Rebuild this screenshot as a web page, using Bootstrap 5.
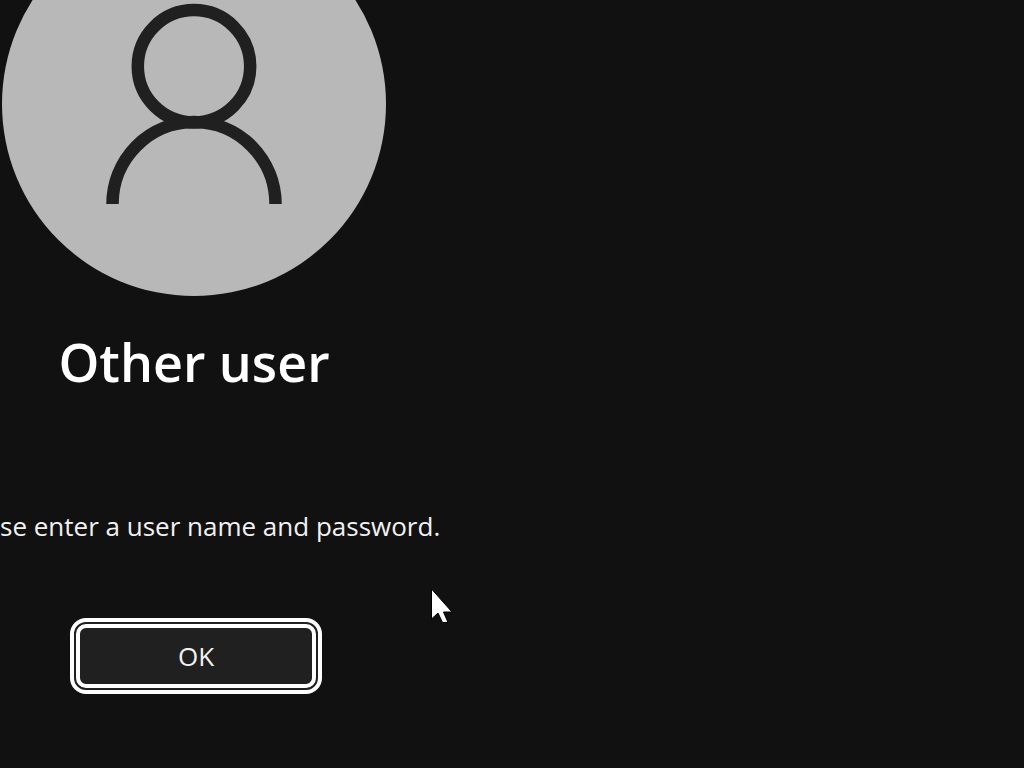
<!DOCTYPE html>
<html lang="en">
<head>
<meta charset="utf-8">
<meta name="viewport" content="width=device-width, initial-scale=1">
<title>Other user</title>
<link href="https://cdn.jsdelivr.net/npm/bootstrap@5.3.0/dist/css/bootstrap.min.css" rel="stylesheet">
<style>
  body { background: #111; color: #fff; font-family: "Open Sans", "Noto Sans", sans-serif; }
  .sign-in { width: 388px; }
  .avatar { width: 384px; height: 296px; }
  .user-name { font-size: 52px; font-weight: 600; line-height: 64px; margin-top: 34px; }
  .message { color: #f2f2f2; font-size: 26px; line-height: 36px; margin-top: 114px; }
  .btn-ok {
    --bs-btn-color: #f2f2f2; --bs-btn-bg: #202020; --bs-btn-border-color: #fff;
    --bs-btn-hover-color: #fff; --bs-btn-hover-bg: #2b2b2b; --bs-btn-hover-border-color: #fff;
    --bs-btn-border-width: 4px; --bs-btn-border-radius: 10px; --bs-btn-font-size: 26px;
    width: 240px; height: 64px; margin: 80px 0 0 4px; line-height: 36px;
    outline: 4px solid #fff; outline-offset: 2px; box-shadow: 0 0 0 2px #202020;
  }
  .pointer { left: 430px; top: 586px; width: 24px; height: 38px; }
</style>
</head>
<body class="vh-100 overflow-hidden position-relative">
<main class="sign-in d-flex flex-column align-items-center">
  <svg class="avatar flex-shrink-0" viewBox="0 88 384 296" aria-hidden="true">
    <circle cx="192" cy="192" r="192" fill="#b8b8b8"/>
    <g fill="none" stroke="#202020" stroke-width="12.5">
      <circle cx="192" cy="154.300" r="56.200"/>
      <path d="M110.500 292a81.500 82 0 0 1 163 0"/>
    </g>
  </svg>
  <h1 class="user-name mb-0 text-nowrap">Other user</h1>
  <p class="message mb-0 text-nowrap align-self-start">se enter a user name and password.</p>
  <button type="button" class="btn btn-ok p-0">OK</button>
</main>
<svg class="pointer position-absolute" viewBox="0 0 24 38" aria-hidden="true">
  <path d="M1.500 3v30l6.500-6 4.500 9.500h5.500l-4.500-10.500h8.500z" fill="#fff" stroke="#000" stroke-width="1"/>
</svg>
<script src="https://cdn.jsdelivr.net/npm/bootstrap@5.3.0/dist/js/bootstrap.bundle.min.js"></script>
</body>
</html>
